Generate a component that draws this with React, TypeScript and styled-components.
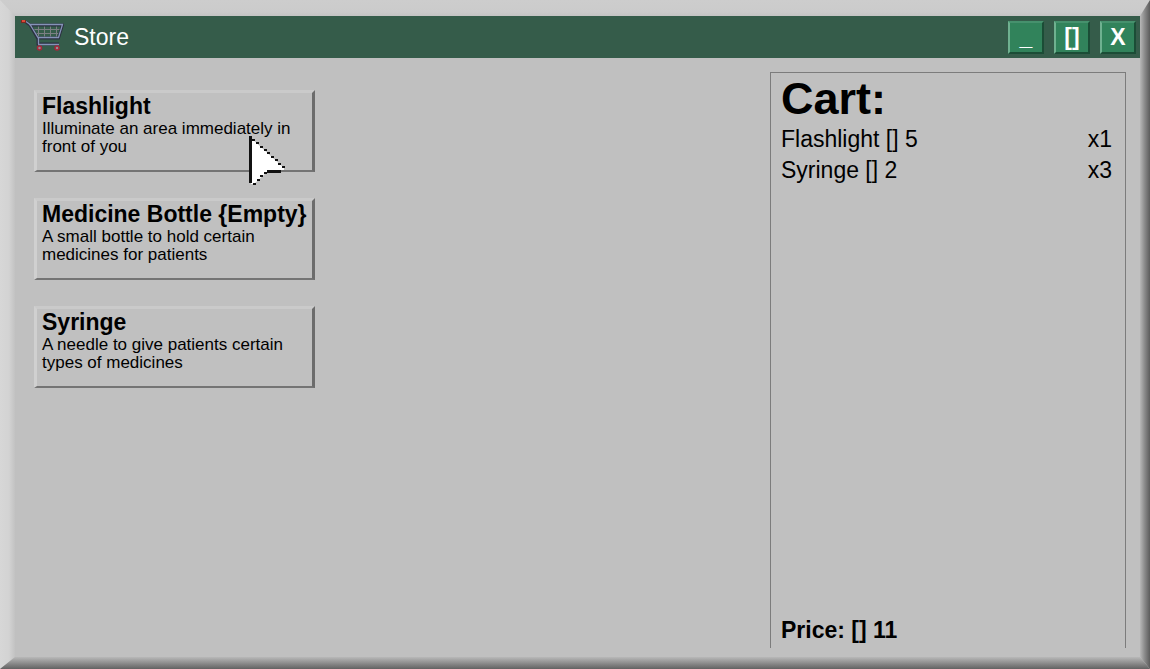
import React from "react";
import styled, { createGlobalStyle } from "styled-components";

const GlobalStyle = createGlobalStyle`
  * { box-sizing: border-box; }
  body { margin: 0; background: #c0c0c0; }
  h1, h2, p, ul { margin: 0; padding: 0; }
  body, button { font-family: "Liberation Sans", Arial, sans-serif; color: #000; }
`;

const Window = styled.div`
  position: relative;
  min-height: 100vh;
  padding: 16px 10px 12px 15px;
  background: #c0c0c0;
  display: flex;
  flex-direction: column;
  overflow: hidden;
`;

const Edge = styled.span<{ $side: "top" | "right" | "bottom" | "left" }>`
  position: absolute;
  pointer-events: none;
  ${({ $side }) =>
    ({
      top: `inset: 0 0 auto 0; height: 16px;
        background: linear-gradient(#cdcdcd, #cbcbcb 75%, #c4c4c4);`,
      left: `inset: 0 auto 0 0; width: 15px;
        background: linear-gradient(90deg, #d7d7d7, #d3d3d3 60%, #c2c2c2);
        clip-path: polygon(0 0, 100% 16px, 100% calc(100% - 12px), 0 100%);`,
      right: `inset: 0 0 0 auto; width: 10px;
        background: linear-gradient(90deg, #b8b8b8, #8c8c8c 45%, #5c5c5c);
        clip-path: polygon(0 16px, 100% 0, 100% 100%, 0 calc(100% - 12px));`,
      bottom: `inset: auto 0 0 0; height: 12px;
        background: linear-gradient(#b8b8b8, #929292 45%, #626262);
        clip-path: polygon(15px 0, calc(100% - 10px) 0, 100% 100%, 0 100%);`,
    })[$side]}
`;

const TitleBar = styled.header`
  display: flex;
  align-items: center;
  height: 42px;
  padding: 0 4px 0 6px;
  background: #355c4a;
`;

const Title = styled.h1`
  flex: 1;
  margin-left: 10px;
  font-size: 23px;
  line-height: 26px;
  font-weight: 400;
  color: #fff;
`;

const Controls = styled.div`
  display: flex;
  gap: 10px;
`;

const ControlButton = styled.button`
  width: 36px;
  height: 33px;
  padding: 0;
  border: 2px solid;
  border-color: #46916d #1b4d36 #1b4d36 #6fb190;
  background: #31835b;
  color: #fff;
  font-size: 23px;
  line-height: 28px;
  font-weight: 700;
`;

const Content = styled.main`
  flex: 1;
  display: flex;
  justify-content: space-between;
  padding: 14px 14px 9px 19px;
`;

const Products = styled.section`
  display: flex;
  flex-direction: column;
  gap: 26px;
  width: 281px;
  padding-top: 18px;
`;

const ProductCard = styled.button`
  display: flex;
  flex-direction: column;
  height: 82px;
  padding: 0 5px;
  border: 3px solid;
  border-color: #cacaca #6c6c6c #747474 #d0d0d0;
  border-bottom-width: 2px;
  background: #c0c0c0;
  text-align: left;
`;

const ProductName = styled.strong`
  font-size: 23px;
  line-height: 27px;
  white-space: nowrap;
`;

const ProductText = styled.span`
  font-size: 17px;
  line-height: 18px;
`;

const Cart = styled.aside`
  display: flex;
  flex-direction: column;
  width: 356px;
  padding: 0 13px 4px 10px;
  border: 1px solid #7c7c7c;
  border-bottom: 0;
`;

const CartHeading = styled.h2`
  font-size: 45px;
  line-height: 51px;
`;

const CartList = styled.ul`
  flex: 1;
  list-style: none;
`;

const CartRow = styled.li`
  display: flex;
  justify-content: space-between;
  font-size: 23px;
  line-height: 31px;
`;

const Price = styled.p`
  font-size: 23px;
  line-height: 28px;
  font-weight: 700;
`;

const Pointer = styled.svg`
  position: absolute;
  left: 249px;
  top: 136px;
  pointer-events: none;
`;

const products = [
  { name: "Flashlight", text: "Illuminate an area immediately in front of you" },
  { name: "Medicine Bottle {Empty}", text: "A small bottle to hold certain medicines for patients" },
  { name: "Syringe", text: "A needle to give patients certain types of medicines" },
];

const cart = [
  { name: "Flashlight", price: 5, count: 1 },
  { name: "Syringe", price: 2, count: 3 },
];

const total = cart.reduce((sum, item) => sum + item.price * item.count, 0);

const pointerSteps = [
  [3, 3], [7, 6], [11, 10], [15, 13], [18, 16], [22, 20], [26, 23], [29, 27], [33, 30],
  [15, 36], [11, 39], [8, 43], [4, 47],
];

const CartIcon = () => (
  <svg width="43" height="34" viewBox="0 0 43 34" fill="none" aria-hidden="true">
    <path d="M17.5 5v13M23.5 5v13M29.5 5v13M35.5 5v13M11 9.500h30M13 13.500h26" stroke="#7b7f83" />
    <path d="M5 2l4 3 8 14v5h21M8 5h33.500l-4 13H17" stroke="#2b3040" strokeWidth="3" />
    <path d="M5 1.500l4 3 8.500 14V24M8 4.500h33.500l-4 13H17M17 24.500h21" stroke="#8593b8" strokeWidth="1.300" />
    <path d="M0 0h5v3H0z" fill="#7c2820" />
    <path d="M1 0h3v2H1z" fill="#dd4b3a" />
    <circle cx="18.500" cy="28" r="2" fill="#8f8f95" stroke="#a8263a" strokeWidth="1.500" />
    <circle cx="36" cy="28" r="2" fill="#8f8f95" stroke="#a8263a" strokeWidth="1.500" />
  </svg>
);

export default function App() {
  return (
    <>
      <GlobalStyle />
      <Window>
        <Edge $side="top" />
        <Edge $side="left" />
        <Edge $side="right" />
        <Edge $side="bottom" />
        <TitleBar>
          <CartIcon />
          <Title>Store</Title>
          <Controls>
            <ControlButton aria-label="Minimize">_</ControlButton>
            <ControlButton aria-label="Maximize">[]</ControlButton>
            <ControlButton aria-label="Close">X</ControlButton>
          </Controls>
        </TitleBar>
        <Content>
          <Products>
            {products.map((p) => (
              <ProductCard key={p.name}>
                <ProductName>{p.name}</ProductName>
                <ProductText>{p.text}</ProductText>
              </ProductCard>
            ))}
          </Products>
          <Cart>
            <CartHeading>Cart:</CartHeading>
            <CartList>
              {cart.map((c) => (
                <CartRow key={c.name}>
                  <span>{`${c.name} [] ${c.price}`}</span>
                  <span>{`x${c.count}`}</span>
                </CartRow>
              ))}
            </CartList>
            <Price>{`Price: [] ${total}`}</Price>
          </Cart>
        </Content>
        <Pointer width="38" height="52" viewBox="0 0 38 52" aria-hidden="true">
          <path d="M2 2L35 32V34H18V36L5 48H2z" fill="#fff" />
          <path d="M0 0h3v47H0zM18 34h14v3H18z" fill="#111" />
          {pointerSteps.map(([x, y]) => (
            <rect key={`${x}-${y}`} x={x} y={y} width="3" height="2" fill="#111" />
          ))}
        </Pointer>
      </Window>
    </>
  );
}
